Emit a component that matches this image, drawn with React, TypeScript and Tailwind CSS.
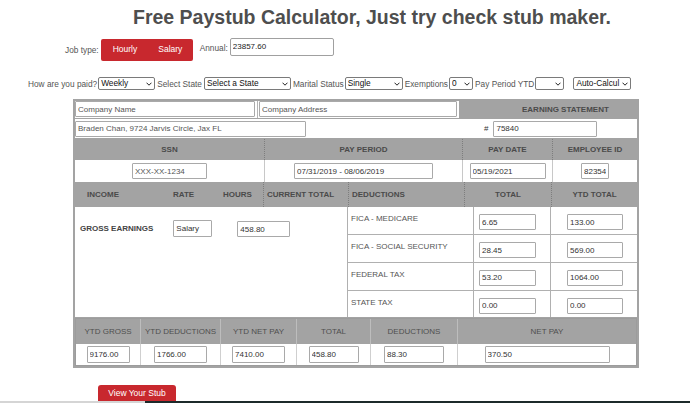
import React from "react";

const inp =
  "border border-[#a9a9a9] bg-white text-[8px] text-[#333] px-[2px] outline-none rounded-[1px]";

function In({ v, w, h = 16, cls = "" }: { v: string; w: number; h?: number; cls?: string }) {
  return (
    <input
      readOnly
      value={v}
      className={`${inp} ${cls}`}
      style={{ width: w, height: h }}
    />
  );
}

function Sel({ v, w, cls = "" }: { v: string; w: number; cls?: string }) {
  return (
    <div
      className={`flex items-center border border-[#7a7a7a] rounded-[2px] h-[13px] bg-white text-[8.3px] text-[#111] pl-[2px] pr-[2px] ${cls}`}
      style={{ width: w }}
    >
      <span className="flex-1 overflow-hidden whitespace-nowrap leading-[11px]">{v}</span>
      <svg width="6" height="4" viewBox="0 0 6 4" className="shrink-0 ml-[1px]">
        <path d="M0.5 0.7 L3 3.2 L5.5 0.7" fill="none" stroke="#222" strokeWidth="1" />
      </svg>
    </div>
  );
}

export default function App() {
  const dedRows = [
    { label: "FICA - MEDICARE", t: "6.65", y: "133.00" },
    { label: "FICA - SOCIAL SECURITY", t: "28.45", y: "569.00" },
    { label: "FEDERAL TAX", t: "53.20", y: "1064.00" },
    { label: "STATE TAX", t: "0.00", y: "0.00" },
  ];
  const bottom = [
    { h: "YTD GROSS", v: "9176.00", w: 65, iw: 43 },
    { h: "YTD DEDUCTIONS", v: "1766.00", w: 80, iw: 53 },
    { h: "YTD NET PAY", v: "7410.00", w: 76, iw: 53 },
    { h: "TOTAL", v: "458.80", w: 74, iw: 50 },
    { h: "DEDUCTIONS", v: "88.30", w: 87, iw: 60 },
    { h: "NET PAY", v: "370.50", w: 180, iw: 125 },
  ];
  return (
    <div className="w-[690px] h-[403px] overflow-hidden bg-white font-['Liberation_Sans',Arial,sans-serif] text-[#555] flex flex-col">
      {/* Title */}
      <div className="pl-[133px] pt-[5px] h-[38px] text-[19.5px] leading-[24px] font-bold text-[#4e4e4e] whitespace-nowrap">
        Free Paystub Calculator, Just try check stub maker.
      </div>

      {/* Job type row */}
      <div className="flex items-start h-[24px] pl-[65px] text-[8.3px]">
        <span className="mt-[6px]">Job type:</span>
        <div className="ml-[2px] mt-[1px] h-[22px] w-[92px] bg-[#c8282e] rounded-[2px] flex items-center text-white text-[8.5px]">
          <span className="ml-[12px]">Hourly</span>
          <span className="ml-[21px]">Salary</span>
        </div>
        <span className="ml-[7px] mt-[4px]">Annual:</span>
        <input
          readOnly
          value="23857.60"
          className="ml-[2px] w-[104px] h-[18px] border border-[#a0a0a0] rounded-[2px] text-[8px] text-[#222] px-[2px] outline-none"
        />
      </div>

      {/* Options row */}
      <div className="flex items-center mt-[16px] h-[13px] pl-[28px] text-[8.3px] whitespace-nowrap">
        <span>How are you paid?</span>
        <Sel v="Weekly" w={57} cls="ml-[1px]" />
        <span className="ml-[2px]">Select State</span>
        <Sel v="Select a State" w={87} cls="ml-[2px]" />
        <span className="ml-[2px]">Marital Status</span>
        <Sel v="Single" w={58} cls="ml-[1px]" />
        <span className="ml-[2px]">Exemptions</span>
        <Sel v="0" w={24} cls="ml-[1px]" />
        <span className="ml-[2px]">Pay Period YTD</span>
        <Sel v="" w={29} cls="ml-[1px]" />
        <Sel v="Auto-Calcul" w={58} cls="ml-[9px]" />
      </div>

      {/* Main table */}
      <div className="ml-[73px] mt-[9px] w-[566px] border-2 border-[#a3a3a3] text-[8px]">
        {/* Row 1 */}
        <div className="flex h-[18px] border-b border-[#a3a3a3]">
          <div className="w-[183px] pb-[1px] pr-[2px] border-r border-[#b5b5b5]">
            <input readOnly value="Company Name" className={`${inp} w-full h-full text-[#555]`} />
          </div>
          <div className="w-[201px] pb-[1px] pl-[1px] pr-[2px]">
            <input readOnly value="Company Address" className={`${inp} w-full h-full text-[#555]`} />
          </div>
          <div className="flex-1 bg-[#a3a3a3] flex items-center pl-[63px] font-bold text-[#4a4a4a]">
            EARNING STATEMENT
          </div>
        </div>
        {/* Row 2 */}
        <div className="flex items-center h-[20px] border-b border-[#a3a3a3]">
          <In v="Braden Chan, 9724 Jarvis Circle, Jax FL" w={231} h={16} cls="text-[#555]" />
          <span className="ml-[178px] text-[#333]">#</span>
          <In v="75840" w={104} h={16} cls="ml-[5px]" />
        </div>
        {/* Section B */}
        <div className="grid grid-cols-[190px_198px_90px_84px]">
          {["SSN", "PAY PERIOD", "PAY DATE", "EMPLOYEE ID"].map((t, i) => (
            <div
              key={t}
              className={`h-[21px] bg-[#a3a3a3] flex items-center justify-center font-bold text-[#4a4a4a] ${i < 3 ? "border-r border-dotted border-[#7d7d7d]" : ""}`}
            >
              {t}
            </div>
          ))}
          <div className="h-[22px] flex items-center justify-center border-r border-[#c8c8c8]">
            <In v="XXX-XX-1234" w={75} cls="text-[#555]" />
          </div>
          <div className="h-[22px] flex items-center justify-center border-r border-[#c8c8c8]">
            <In v="07/31/2019 - 08/06/2019" w={139} />
          </div>
          <div className="h-[22px] flex items-center justify-center border-r border-[#c8c8c8]">
            <In v="05/19/2021" w={76} />
          </div>
          <div className="h-[22px] flex items-center justify-center">
            <In v="823542" w={28} cls="px-[1px]" />
          </div>
        </div>
        {/* Section C header */}
        <div className="flex h-[25px] bg-[#a3a3a3] font-bold text-[#4a4a4a]">
          <div className="w-[189px] flex items-center border-r border-dotted border-[#7d7d7d]">
            <span className="ml-[12px] w-[86px]">INCOME</span>
            <span className="w-[50px]">RATE</span>
            <span>HOURS</span>
          </div>
          <div className="w-[84px] flex items-center pl-[3px]">CURRENT TOTAL</div>
          <div className="w-[116px] flex items-center pl-[3px] border-l border-dotted border-[#7d7d7d]">
            DEDUCTIONS
          </div>
          <div className="w-[87px] flex items-center justify-center border-l border-dotted border-[#7d7d7d]">
            TOTAL
          </div>
          <div className="flex-1 flex items-center justify-center border-l border-dotted border-[#7d7d7d]">
            YTD TOTAL
          </div>
        </div>
        {/* Section C body */}
        <div className="flex h-[111px] border-b border-[#a3a3a3]">
          <div className="w-[273px] border-r border-[#b0b0b0] flex items-start">
            <span className="ml-[5px] mt-[16px] font-bold text-[#444]">GROSS EARNINGS</span>
            <In v="Salary" w={39} h={17} cls="ml-[20px] mt-[13px]" />
            <In v="458.80" w={53} h={16} cls="ml-[25px] mt-[14px]" />
          </div>
          <div className="flex-1 flex flex-col">
            {dedRows.map((r, i) => (
              <div
                key={r.label}
                className={`flex flex-1 ${i < 3 ? "border-b border-[#b0b0b0]" : ""}`}
              >
                <div className="w-[126px] border-r border-[#b0b0b0] pl-[3px] pt-[6px] text-[#555]">
                  {r.label}
                </div>
                <div className="w-[77px] border-r border-[#b0b0b0] flex items-start">
                  <In v={r.t} w={57} cls="ml-[5px] mt-[7px]" />
                </div>
                <div className="flex-1 flex items-start">
                  <In v={r.y} w={56} cls="ml-[16px] mt-[7px]" />
                </div>
              </div>
            ))}
          </div>
        </div>
        {/* Section D */}
        <div className="border border-[#9c9c9c]">
          <div className="flex h-[25px] bg-[#a3a3a3] text-[#4f4f4f]">
            {bottom.map((b, i) => (
              <div
                key={b.h}
                className={`flex items-center justify-center ${i < 5 ? "border-r border-[#bdbdbd]" : "flex-1"}`}
                style={i < 5 ? { width: b.w } : undefined}
              >
                {b.h}
              </div>
            ))}
          </div>
          <div className="flex h-[21px] bg-white">
            {bottom.map((b, i) => (
              <div
                key={b.h}
                className={`flex items-center justify-center ${i < 5 ? "border-r border-[#cfcfcf]" : "flex-1"}`}
                style={i < 5 ? { width: b.w } : undefined}
              >
                <In v={b.v} w={b.iw} h={17} />
              </div>
            ))}
          </div>
        </div>
      </div>

      {/* Button */}
      <div className="ml-[98px] mt-[17px] w-[78px] h-[16px] bg-[#c8282e] rounded-t-[3px] flex items-center justify-center text-white text-[8.5px]">
        View Your Stub
      </div>
      <div className="flex h-[2px]">
        <div className="w-[145px] bg-[#d5d5d5]" />
        <div className="flex-1 bg-[#1c2a2a]" />
      </div>
    </div>
  );
}
